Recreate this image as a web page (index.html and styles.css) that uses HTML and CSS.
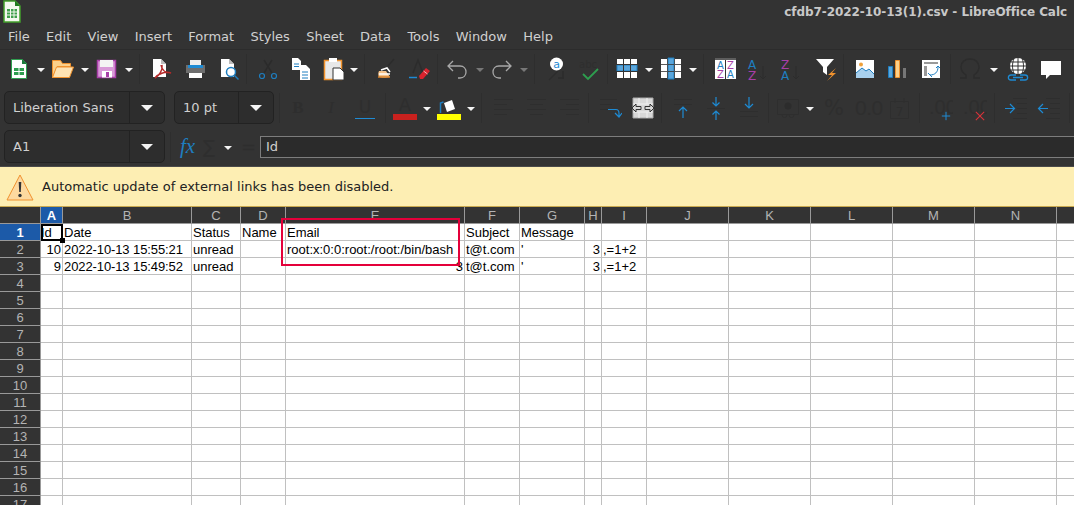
FILE: index.html
```html
<!DOCTYPE html>
<html>
	<head>
		<meta charset="utf-8">
		<title>cfdb7-2022-10-13(1).csv - LibreOffice Calc</title>
		<link rel="stylesheet" href="styles.css">
	</head>
	<body>
		<div class="window">
			<div class="titlebar">
				<svg class="app-icon" viewBox="0 0 20 24"><path d="M3 1h11l5 5v16H3z" fill="#f4f8ee" stroke="#43a02c" stroke-width="1.5"/><path d="M14 1l5 5h-5z" fill="#1f7a1f"/><path d="M6 9h10v9H6z" fill="#3f9f4a"/><path d="M6 12h10M6 15h10M9.500 9v9M13 9v9" stroke="#f4f8ee"/></svg>
				<span class="title-text">cfdb7-2022-10-13(1).csv - LibreOffice Calc</span>
			</div>
			<div class="menubar">
				<span>File</span><span>Edit</span><span>View</span><span>Insert</span><span>Format</span><span>Styles</span><span>Sheet</span><span>Data</span><span>Tools</span><span>Window</span><span>Help</span>
			</div>

			<!-- standard toolbar -->
			<div class="toolbar tb-standard">
				<svg class="ic" viewBox="0 0 24 24"><path d="M4.500 2.500h11l4 4v15h-15z" fill="#fff" stroke="#2e9e4f"/><path d="M15 2l5 5h-5z" fill="#1c7a3c"/><path d="M7 11h10v7H7z" fill="#2e9e4f"/><path d="M7 14.500h10M12 11v7" stroke="#fff"/></svg>
				<span class="dd"></span>
				<svg class="ic" viewBox="0 0 24 24"><path d="M1.500 20.500V3.500h8l2 3h8v3h-13l-5 11z" fill="#fbd08a" stroke="#f0922e"/><path d="M1.500 20.500l4-10.500h17l-4 10.500z" fill="#fde3b3" stroke="#f0922e"/></svg>
				<span class="dd"></span>
				<svg class="ic" viewBox="0 0 24 24"><path d="M2.500 3.500h18v17h-18z" fill="#d99ad8" stroke="#a83fa8" stroke-width="1.500"/><path d="M5 3h13v7H5z" fill="#f4f4f4"/><path d="M7 14h10v6.500H7z" fill="#fff"/><path d="M11 15h3v5h-3z" fill="#a83fa8"/></svg>
				<span class="dd"></span>
				<span class="sep"></span>
				<svg class="ic nudge" viewBox="0 0 24 24"><path d="M3 2h8l5 5v13H3z" fill="#fff"/><path d="M11 2l5 5h-5z" fill="#bbb"/><path d="M12 8c1 5-3 11-7 13 3-4 10-7 16-5-5 0-9-2-10-8" fill="none" stroke="#b52a2a" stroke-width="1.500"/></svg>
				<svg class="ic" viewBox="0 0 24 24"><path d="M7 3h11v5H7z" fill="#eee"/><path d="M3 8h19v8H3z" fill="#6e6e6e"/><path d="M5 8h15v3H5z" fill="#1e8bd4"/><path d="M6 16h13v5H6z" fill="#fff"/></svg>
				<svg class="ic nudge" viewBox="0 0 24 24"><path d="M4 2h8l5 5v13H4z" fill="#fff"/><path d="M12 2l5 5h-5z" fill="#bbb"/><circle cx="14" cy="15" r="4.500" fill="#fff" stroke="#1e7ec0" stroke-width="1.500"/><path d="M17.500 18.500l4 4" stroke="#1e7ec0" stroke-width="1.500"/></svg>
				<span class="sep"></span>
				<svg class="ic" viewBox="0 0 24 24"><path d="M8 3l8 13M16 3L8 16" stroke="#2b2b2b" stroke-width="1.500"/><circle cx="6" cy="19" r="2.500" fill="none" stroke="#1e7ec0" stroke-width="1.200"/><circle cx="18" cy="19" r="2.500" fill="none" stroke="#1e7ec0" stroke-width="1.200"/></svg>
				<svg class="ic" viewBox="0 0 24 24"><path d="M3 1h6l3 3v9H3z" fill="#fff"/><path d="M5 7h5M5 9.500h5" stroke="#1e7ec0"/><path d="M11 8h6l4 4v11H11z" fill="#fff"/><path d="M13 15h6M13 18h6M13 21h6" stroke="#1e7ec0"/></svg>
				<svg class="ic" viewBox="0 0 24 24"><path d="M2.500 3.500h17v19h-17z" fill="#e8e8e8" stroke="#f0922e" stroke-width="1.500"/><path d="M7 1h8v4H7z" fill="#fff"/><path d="M11 11h7l4 4v8H11z" fill="#fff" stroke="#333"/></svg>
				<span class="dd dd-tight"></span>
				<span class="sep"></span>
				<svg class="ic" viewBox="0 0 24 24"><path d="M14 9l6-7" stroke="#2c2c2c" stroke-width="1.500"/><path d="M5 14l7 0 4 6c-3 1-9 1-11 0-1-2-1-4 0-6z" fill="#f5c28a"/><path d="M5 17h11M7 13l6-2 3 4" stroke="#fff" stroke-width="1.500" fill="none"/><path d="M4 20h12" stroke="#d9822b" stroke-width="1.500"/></svg>
				<svg class="ic" viewBox="0 0 24 24"><path d="M6 16L11 3l5 13" fill="none" stroke="#2c2c2c" stroke-width="1.500"/><path d="M2 20.500h8" stroke="#1e8bd4" stroke-width="1.500"/><path d="M12 19l7-8 4 3-7 8h-3z" fill="#d9232e"/><path d="M16.500 14l4 3" stroke="#f3b0b0"/></svg>
				<span class="sep sep-tight sep-l1"></span>
				<svg class="ic" viewBox="0 0 24 24"><path d="M8 4L3 9l5 5M3 9h12c4 0 6 3 6 6s-2 6-6 6h-2" fill="none" stroke="#a8a8a8" stroke-width="1.300"/></svg>
				<span class="dd dd-off dd-l1"></span>
				<svg class="ic" viewBox="0 0 24 24"><path d="M16 4l5 5-5 5M21 9H9c-4 0-6 3-6 6s2 6 6 6h2" fill="none" stroke="#a8a8a8" stroke-width="1.300"/></svg>
				<span class="dd dd-off"></span>
				<span class="sep"></span>
				<svg class="ic nudge" viewBox="0 0 24 24"><path d="M4 23l9-9M13 21h6M18 14v8" stroke="#2c2c2c" stroke-width="1.300" fill="none"/><circle cx="11.500" cy="7" r="6.500" fill="#fff"/><text x="11.500" y="10.500" class="find-a">a</text></svg>
				<svg class="ic" viewBox="0 0 24 24"><text x="1" y="11" class="spell-abc">abc</text><path d="M5 17l5 5L20 12" fill="none" stroke="#2e9e4f" stroke-width="1.800"/></svg>
				<span class="sep sep-tight"></span>
				<svg class="ic" viewBox="0 0 24 24"><path d="M2 2h20v19H2z" fill="#fff"/><path d="M2 8h20v6H2z" fill="#5aa6dc" stroke="#1e7ec0"/><path d="M2 7.500h20M2 14.500h20M8.500 2v19M15.500 2v19" stroke="#333"/></svg>
				<span class="dd"></span>
				<svg class="ic" viewBox="0 0 24 24"><path d="M2 2h20v19H2z" fill="#fff"/><path d="M9 1h6v21H9z" fill="#5aa6dc" stroke="#1e7ec0"/><path d="M2 7.500h20M2 14.500h20M8.500 2v19M15.500 2v19" stroke="#333" opacity=".8"/></svg>
				<span class="dd"></span>
				<span class="sep"></span>
				<svg class="ic" viewBox="0 0 24 24"><path d="M2 3h21v19H2z" fill="#fff"/><path d="M2 2h21" stroke="#888"/><path d="M12.500 3v19" stroke="#333"/><text x="4" y="12" class="sort-b">A</text><text x="14" y="12" class="sort-p">Z</text><text x="4" y="21" class="sort-p">Z</text><text x="14" y="21" class="sort-b">A</text></svg>
				<svg class="ic nudge" viewBox="0 0 24 24"><text x="1" y="12" class="sort-l sort-b">A</text><text x="1" y="23" class="sort-l sort-p">Z</text><path d="M16 9v13M13 19l3 3 3-3" stroke="#2c2c2c" fill="none"/></svg>
				<svg class="ic" viewBox="0 0 24 24"><text x="1" y="12" class="sort-l sort-p">Z</text><text x="1" y="23" class="sort-l sort-b">A</text><path d="M16 9v13M13 19l3 3 3-3" stroke="#2c2c2c" fill="none"/></svg>
				<svg class="ic nudge" viewBox="0 0 24 24"><path d="M2 2h18l-7 8v8l-4-3v-5z" fill="#fff"/><path d="M22 11l-8 7h4l-5 6 9-8h-4z" fill="#f0922e"/></svg>
				<span class="sep"></span>
				<svg class="ic" viewBox="0 0 24 24"><path d="M3 3h18v18H3z" fill="#fff"/><circle cx="8" cy="7.500" r="2" fill="#f0a13a"/><path d="M3 21v-5l6-5 4 3 3-2 5 5v4z" fill="#a8d0ee"/><path d="M3 16l6-5 4 3 3-2 5 5" fill="none" stroke="#1e7ec0"/></svg>
				<svg class="ic" viewBox="0 0 24 24"><path d="M2.500 9.500h4v11h-4z" fill="#5aa6dc" stroke="#1e7ec0"/><path d="M9.500 3.500h4v17h-4z" fill="#fbd08a" stroke="#f0922e"/><path d="M17 11h3v10h-3z" fill="#777"/></svg>
				<svg class="ic" viewBox="0 0 24 24"><path d="M3 3h18v18H3z" fill="#fff"/><path d="M5 5h14v2H5zM5 9h3v10H5z" fill="#999"/><path d="M11 18c5 0 8-3 8-8M9 16l2 2 2 2M17 11l2-2 2 2" fill="none" stroke="#1e7ec0"/></svg>
				<span class="sep sep-l2"></span>
				<svg class="ic" viewBox="0 0 24 24"><path d="M0 21h6v-3C3 16 1 14 1 10c0-5 4-8 9-8s9 3 9 8c0 4-2 6-5 8v3h6" fill="none" stroke="#2c2c2c" stroke-width="1.500"/></svg>
				<span class="dd"></span>
				<svg class="ic ic-l2" viewBox="0 0 24 24"><circle cx="12" cy="9" r="8" fill="#fff"/><path d="M4 9h16M5 5h14M5 13h14M12 1v16M8 1.500c-2 5-2 10 0 15M16 1.500c2 5 2 10 0 15" stroke="#333" fill="none"/><path d="M10 18H5c-3.500 0-3.500 5 0 5h5M14 18h5c3.500 0 3.500 5 0 5h-5M7 20.500h10" stroke="#1e8bd4" stroke-width="1.300" fill="none"/></svg>
				<svg class="ic" viewBox="0 0 24 24"><path d="M2 4h20v14H11l-4 4v-4H2z" fill="#fff"/></svg>
			</div>

			<!-- formatting toolbar -->
			<div class="toolbar tb-format">
				<div class="combo combo-font"><span class="combo-value">Liberation Sans</span><span class="combo-btn"></span></div>
				<div class="combo combo-size"><span class="combo-value">10 pt</span><span class="combo-btn"></span></div>
				<span class="sep"></span>
				<span class="off-glyph bold">B</span>
				<span class="off-glyph italic">I</span>
				<span class="off-glyph under">U</span>
				<span class="sep sep-tight sep-l5"></span>
				<span class="color-btn"><span class="off-glyph">A</span><span class="swatch swatch-red"></span></span>
				<span class="dd"></span>
				<svg class="ic" viewBox="0 0 24 24"><path d="M3.500 17V7l3-1" fill="none" stroke="#1e7ec0" stroke-width="1.500"/><path d="M7 7l8-3 3 9-8 3z" fill="#fff"/><path d="M0 18h24v6H0z" fill="#ffff00"/></svg>
				<span class="dd"></span>
				<span class="sep"></span>
				<svg class="ic nudge" viewBox="0 0 24 24"><path d="M2 3.500h19M2 8.500h13M2 13.500h19M2 18.500h13" class="off-line"/></svg>
				<svg class="ic" viewBox="0 0 24 24"><path d="M2 3.500h19M5 8.500h13M2 13.500h19M5 18.500h13" class="off-line"/></svg>
				<svg class="ic" viewBox="0 0 24 24"><path d="M2 3.500h19M8 8.500h13M2 13.500h19M8 18.500h13" class="off-line"/></svg>
				<span class="sep sep-l1"></span>
				<svg class="ic" viewBox="0 0 24 24"><path d="M2 3.500h17M2 8.500h12M2 13.500h8" class="off-line"/><path d="M10 13.500h8c2 0 3 2 3 4v3M17 17l4 4 3-4" fill="none" stroke="#1e8bd4" stroke-width="1.200"/></svg>
				<svg class="ic" viewBox="0 0 24 24"><path d="M2 2h20v20H2z" fill="#d8d8d8" stroke="#aaa"/><path d="M2 8h20M2 16h20M8 2v6M16 2v6M8 16v6M16 16v6" stroke="#f0f0f0"/><path d="M1 12l4-4v2.500h5v3H5V16zM23 12l-4-4v2.500h-5v3h5V16z" fill="#d8d8d8" stroke="#333"/></svg>
				<span class="sep sep-l1"></span>
				<svg class="ic" viewBox="0 0 24 24"><path d="M3 3.500h18M3 8.500h18" class="off-line"/><path d="M12 22V11M8 15l4-4 4 4" fill="none" stroke="#1e8bd4" stroke-width="1.200"/></svg>
				<svg class="ic" viewBox="0 0 24 24"><path d="M3 12.500h18" class="off-line"/><path d="M12 1v9M8.500 6.500l3.500 3.500 3.500-3.500M12 24v-9M8.500 18.500l3.500-3.500 3.500 3.500" fill="none" stroke="#1e8bd4" stroke-width="1.200"/></svg>
				<svg class="ic" viewBox="0 0 24 24"><path d="M3 15.500h18M3 20.500h18" class="off-line"/><path d="M12 1v11M8 8l4 4 4-4" fill="none" stroke="#1e8bd4" stroke-width="1.200"/></svg>
				<span class="sep sep-tight sep-l2"></span>
				<svg class="ic" viewBox="0 0 24 24"><path d="M1.500 3.500h21v15h-21z" class="off-line"/><circle cx="12" cy="10" r="3.500" fill="#2c2c2c"/><path d="M6 19a2 2 0 1 0 5 0M13 19a2 2 0 1 0 5 0" class="off-line"/></svg>
				<span class="dd"></span>
				<span class="off-glyph percent">%</span>
				<span class="off-glyph number">0.0</span>
				<svg class="ic ic-l3" viewBox="0 0 24 24"><path d="M3.500 5.500h18v17h-18zM8 2v5M17 2v5" class="off-line"/><text x="12.500" y="20" class="cal-num">7</text></svg>
				<span class="sep sep-l3"></span>
				<span class="dec-btn"><span class="off-glyph">.00</span><svg class="dec-mark" viewBox="0 0 12 12"><path d="M6 1v10M1 6h10" stroke="#1e8bd4" stroke-width="1.200"/></svg></span>
				<span class="dec-btn"><span class="off-glyph">.00</span><svg class="dec-mark" viewBox="0 0 12 12"><path d="M1 1l10 10M11 1L1 11" stroke="#d9333a" stroke-width="1.300"/></svg></span>
				<span class="sep sep-l2"></span>
				<svg class="ic" viewBox="0 0 24 24"><path d="M9 2.500h14M13 7.500h10M13 12.500h10M13 17.500h10M9 22.500h14" class="off-line"/><path d="M1 12.500h9M6 8l4.500 4.500L6 17" fill="none" stroke="#1e8bd4" stroke-width="1.200"/></svg>
				<svg class="ic" viewBox="0 0 24 24"><path d="M9 2.500h14M13 7.500h10M13 12.500h10M13 17.500h10M9 22.500h14" class="off-line"/><path d="M11 12.500H2M6 8l-4.500 4.500L6 17" fill="none" stroke="#1e8bd4" stroke-width="1.200"/></svg>
				<span class="sep sep-l3"></span>
			</div>

			<!-- formula bar -->
			<div class="toolbar tb-formula">
				<div class="combo combo-font"><span class="combo-value">A1</span><span class="combo-btn"></span></div>
				<span class="sep"></span>
				<span class="fx">fx</span>
				<span class="off-glyph sigma">∑</span>
				<span class="dd"></span>
				<span class="off-glyph equals">=</span>
				<div class="formula-input">Id</div>
			</div>

			<div class="infobar">
				<svg class="warn" viewBox="0 0 28 28"><path d="M14 2L1 27h26z" fill="#fdd9a0" stroke="#f0922e"/><path d="M12.700 9h2.600l-.5 10h-1.600z" fill="#333"/><circle cx="14" cy="22.500" r="1.700" fill="#333"/></svg>
				<span>Automatic update of external links has been disabled.</span>
			</div>

			<div class="sheet">
				<table class="grid">
					<colgroup>
						<col class="c-head"><col class="c-a"><col class="c-b"><col class="c-c"><col class="c-d"><col class="c-e"><col class="c-f"><col class="c-g"><col class="c-h"><col class="c-i"><col class="c-std"><col class="c-std"><col class="c-std"><col class="c-std"><col class="c-std"><col class="c-std">
					</colgroup>
					<tr class="col-heads"><th></th><th class="active">A</th><th>B</th><th>C</th><th>D</th><th>E</th><th>F</th><th>G</th><th>H</th><th>I</th><th>J</th><th>K</th><th>L</th><th>M</th><th>N</th><th></th></tr>
					<tr><th class="active">1</th><td class="cursor">Id</td><td>Date</td><td>Status</td><td>Name</td><td>Email</td><td>Subject</td><td>Message</td><td></td><td></td><td></td><td></td><td></td><td></td><td></td><td></td></tr>
					<tr><th>2</th><td class="num">10</td><td class="date">2022-10-13 15:55:21</td><td>unread</td><td></td><td>root:x:0:0:root:/root:/bin/bash</td><td>t@t.com</td><td>'</td><td class="num">3</td><td>,=1+2</td><td></td><td></td><td></td><td></td><td></td><td></td></tr>
					<tr><th>3</th><td class="num">9</td><td class="date">2022-10-13 15:49:52</td><td>unread</td><td></td><td class="num">3</td><td>t@t.com</td><td>'</td><td class="num">3</td><td>,=1+2</td><td></td><td></td><td></td><td></td><td></td><td></td></tr>
					<tr><th>4</th><td></td><td></td><td></td><td></td><td></td><td></td><td></td><td></td><td></td><td></td><td></td><td></td><td></td><td></td><td></td></tr>
					<tr><th>5</th><td></td><td></td><td></td><td></td><td></td><td></td><td></td><td></td><td></td><td></td><td></td><td></td><td></td><td></td><td></td></tr>
					<tr><th>6</th><td></td><td></td><td></td><td></td><td></td><td></td><td></td><td></td><td></td><td></td><td></td><td></td><td></td><td></td><td></td></tr>
					<tr><th>7</th><td></td><td></td><td></td><td></td><td></td><td></td><td></td><td></td><td></td><td></td><td></td><td></td><td></td><td></td><td></td></tr>
					<tr><th>8</th><td></td><td></td><td></td><td></td><td></td><td></td><td></td><td></td><td></td><td></td><td></td><td></td><td></td><td></td><td></td></tr>
					<tr><th>9</th><td></td><td></td><td></td><td></td><td></td><td></td><td></td><td></td><td></td><td></td><td></td><td></td><td></td><td></td><td></td></tr>
					<tr><th>10</th><td></td><td></td><td></td><td></td><td></td><td></td><td></td><td></td><td></td><td></td><td></td><td></td><td></td><td></td><td></td></tr>
					<tr><th>11</th><td></td><td></td><td></td><td></td><td></td><td></td><td></td><td></td><td></td><td></td><td></td><td></td><td></td><td></td><td></td></tr>
					<tr><th>12</th><td></td><td></td><td></td><td></td><td></td><td></td><td></td><td></td><td></td><td></td><td></td><td></td><td></td><td></td><td></td></tr>
					<tr><th>13</th><td></td><td></td><td></td><td></td><td></td><td></td><td></td><td></td><td></td><td></td><td></td><td></td><td></td><td></td><td></td></tr>
					<tr><th>14</th><td></td><td></td><td></td><td></td><td></td><td></td><td></td><td></td><td></td><td></td><td></td><td></td><td></td><td></td><td></td></tr>
					<tr><th>15</th><td></td><td></td><td></td><td></td><td></td><td></td><td></td><td></td><td></td><td></td><td></td><td></td><td></td><td></td><td></td></tr>
					<tr><th>16</th><td></td><td></td><td></td><td></td><td></td><td></td><td></td><td></td><td></td><td></td><td></td><td></td><td></td><td></td><td></td></tr>
					<tr><th>17</th><td></td><td></td><td></td><td></td><td></td><td></td><td></td><td></td><td></td><td></td><td></td><td></td><td></td><td></td><td></td></tr>
				</table>
				<div class="highlight-box"></div>
			</div>
		</div>
	</body>
</html>
```

FILE: styles.css
```css
*{margin: 0;padding: 0;box-sizing: border-box;}
body{
	background: #333;
	overflow: hidden;
	font-family: "DejaVu Sans", sans-serif;
	font-size: 13px;
	color: #d0d0d0;
}
.window{
	width: 100vw;height: 100vh;
	overflow: hidden;
	display: flex;
	flex-direction: column;
}
.titlebar{
	height: 24px;
	flex: none;
	display: flex;
	align-items: center;
	justify-content: space-between;
	padding: 0 7px 0 1px;
}
.app-icon{width: 20px;height: 24px;}
.title-text{font-weight: bold;font-size: 12px;color: #c8c8c8;letter-spacing: -0.07px;}
.menubar{
	height: 26px;
	flex: none;
	display: flex;
	align-items: center;
	gap: 16.300px;
	padding: 0 8px 1px;
	border-bottom: 1px solid #2c2c2c;
}
.toolbar{
	display: flex;
	align-items: center;
	gap: 5px;
	flex: none;
}
.tb-standard{height: 38px;padding-left: 7px;}
.tb-format{height: 39px;padding-left: 4px;}
.tb-formula{height: 39px;padding-left: 4px;}

.ic{width: 24px;height: 24px;flex: none;}
.ic + .ic{margin-left: 4px;}
.ic.nudge{margin-left: 1px;}
.ic + .ic.nudge{margin-left: 5px;}
.ic-l2{margin-left: 2px;}
.ic-l3{margin-left: 3px;}
.sep{
	width: 1px;height: 30px;
	flex: none;
	background: #2e2e2e;
	margin-right: 4px;
}
.sep-tight{margin-right: 2px;}
.sep-l1{margin-left: 1px;}
.sep-l2{margin-left: 2px;}
.sep-l3{margin-left: 3px;}
.sep-l5{margin-left: 5px;}
.dd{
	width: 8px;height: 4px;
	flex: none;
	margin: 2px 1px 0;
	border-top: 4px solid #f4f4f4;
	border-left: 4px solid transparent;
	border-right: 4px solid transparent;
}
.dd-off{border-top-color: #777;}
.dd-tight{margin-left: -1px;}
.dd-l1{margin-left: 2px;}

.combo{
	height: 33px;
	flex: none;
	display: flex;
	background: #2d2d2d;
	border: 1px solid #222;
	border-radius: 5px;
}
.combo-font{width: 161px;}
.combo-size{width: 100px;margin-left: 4px;}
.combo-value{
	flex: 1;
	padding-left: 8px;
	line-height: 31px;
	color: #d0d0d0;
}
.combo-btn{
	width: 35px;
	display: flex;
	align-items: center;
	justify-content: center;
	border-left: 1px solid #222;
}
.combo-btn::after{
	content: "";
	border-top: 6px solid #f4f4f4;
	border-left: 6px solid transparent;
	border-right: 6px solid transparent;
}
.off-glyph{color: #2e2e2e;font-size: 17px;flex: none;}
.off-line{fill: none;stroke: #2e2e2e;stroke-width: 1;}
.bold{font-family: "Liberation Serif", serif;font-weight: bold;width: 24px;text-align: center;margin-left: -3px;}
.italic{font-family: "Liberation Serif", serif;font-style: italic;width: 24px;text-align: center;margin-left: 4px;}
.under{
	width: 20px;
	text-align: center;
	margin-left: 7px;
	border-bottom: 1px solid #1e8bd4;
	line-height: 22px;
}
.color-btn{
	width: 24px;height: 25px;
	flex: none;
	display: flex;
	flex-direction: column;
	align-items: center;
	justify-content: flex-end;
}
.color-btn .off-glyph{font-size: 18px;line-height: 19px;}
.swatch{width: 24px;height: 6px;flex: none;}
.swatch-red{background: #c9211e;}
.percent{font-size: 21px;width: 26px;text-align: center;margin-left: 1px;}
.number{
	font-family: "Liberation Sans", sans-serif;
	font-size: 21px;
	letter-spacing: -0.500px;
	width: 24px;
	text-align: center;
	margin-left: 3px;
}
.dec-btn{
	width: 24px;height: 26px;
	flex: none;
	position: relative;
	display: flex;
	align-items: center;
	overflow: hidden;
}
.dec-btn + .dec-btn{margin-left: 5px;}
.dec-btn .off-glyph{font-family: "Liberation Sans", sans-serif;font-size: 20px;}
.dec-mark{
	position: absolute;
	right: 2px;bottom: 0;
	width: 10px;height: 10px;
}
.cal-num{font-size: 12px;fill: #2e2e2e;text-anchor: middle;font-family: "DejaVu Sans", sans-serif;}
.find-a{font-size: 11px;fill: #1e8bd4;text-anchor: middle;font-family: "DejaVu Sans", sans-serif;}
.spell-abc{font-size: 10px;fill: #2e2e2e;font-family: "DejaVu Sans", sans-serif;}
.sort-b,.sort-p{font-size: 10px;font-family: "DejaVu Sans", sans-serif;}
.sort-l{font-size: 12px;}
.sort-b{fill: #1e7ec0;}
.sort-p{fill: #a83fa8;}
.fx{
	font-family: "Liberation Serif", serif;
	font-style: italic;
	font-size: 21px;
	color: #1e7ec0;
	width: 15px;
	flex: none;
}
.sigma{font-size: 18px;width: 15px;margin-left: 3px;}
.equals{font-size: 18px;width: 14px;margin-left: 3px;}
.formula-input{
	flex: 1;
	height: 22px;
	padding-left: 5px;
	background: #2b2b2b;
	border: 1px solid #7d7d7d;
	border-right: 0;
	line-height: 20px;
}

.infobar{
	height: 41px;
	flex: none;
	display: flex;
	align-items: center;
	gap: 8px;
	padding-left: 6px;
	background: #fdeeb3;
	border-top: 1px solid #4a4a4a;
	border-bottom: 1px solid #c9a94f;
	color: #222;
}
.warn{width: 28px;height: 28px;flex: none;}

.sheet{
	position: relative;
	flex: 1;
	overflow: hidden;
	background: #fff;
}
.grid{
	table-layout: fixed;
	width: 1138px;
	border-collapse: separate;
	border-spacing: 0;
	font-family: "Liberation Sans", sans-serif;
	font-size: 13px;
}
.c-head{width: 41px;}
.c-a{width: 22px;}
.c-b{width: 129px;}
.c-c{width: 49px;}
.c-d{width: 45px;}
.c-e{width: 179px;}
.c-f{width: 55px;}
.c-g{width: 65px;}
.c-h{width: 17px;}
.c-i{width: 45px;}
.c-std{width: 82px;}
.grid tr{height: 17px;}
.grid td{
	height: 17px;
	padding: 2px 1px 0;
	border-right: 1px solid #c0c0c0;
	border-bottom: 1px solid #c0c0c0;
	color: #000;
	white-space: nowrap;
	overflow: visible;
	line-height: 14px;
}
.grid th{
	height: 17px;
	padding-top: 2px;
	background: #333;
	color: #b4b4b4;
	font-weight: normal;
	text-align: center;
	border-right: 1px solid #999;
	border-bottom: 1px solid #999;
	line-height: 14px;
}
.grid th.active{
	background: #1c5aa8;
	color: #fff;
	font-weight: bold;
}
.grid td.num{text-align: right;}
.grid td.date{letter-spacing: -0.100px;}
.grid td.cursor{
	position: relative;
	padding-left: 0;
	outline: 2px solid #000;
	outline-offset: -2px;
}
.grid td.cursor::after{
	content: "";
	position: absolute;
	right: -3px;bottom: -3px;
	width: 5px;height: 5px;
	background: #000;
}
.highlight-box{
	position: absolute;
	left: 281px;top: 11px;
	width: 179px;height: 48px;
	border: 2px solid #e4003a;
}
```
